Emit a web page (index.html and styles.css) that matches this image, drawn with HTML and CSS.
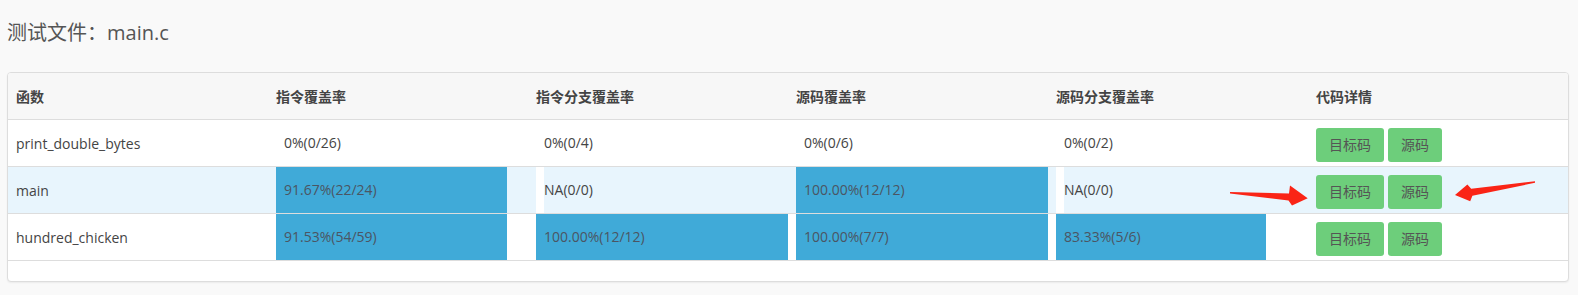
FILE: index.html
```html
<!DOCTYPE html>
<html lang="zh-CN">
<head>
<meta charset="utf-8">
<title>测试文件：main.c</title>
<link rel="stylesheet" href="styles.css">
</head>
<body>
<div class="page">
  <h3 class="title">测试文件：main.c</h3>
  <div class="panel">
    <table class="cov">
      <thead>
        <tr>
          <th>函数</th>
          <th>指令覆盖率</th>
          <th>指令分支覆盖率</th>
          <th>源码覆盖率</th>
          <th>源码分支覆盖率</th>
          <th>代码详情</th>
        </tr>
      </thead>
      <tbody>
        <tr>
          <td class="name">print_double_bytes</td>
          <td class="bar-cell"><div class="bar" style="width:0%">0%(0/26)</div></td>
          <td class="bar-cell"><div class="bar" style="width:0%">0%(0/4)</div></td>
          <td class="bar-cell"><div class="bar" style="width:0%">0%(0/6)</div></td>
          <td class="bar-cell"><div class="bar" style="width:0%">0%(0/2)</div></td>
          <td class="actions"><span class="btn">目标码</span><span class="btn">源码</span></td>
        </tr>
        <tr class="active">
          <td class="name">main</td>
          <td class="bar-cell"><div class="bar filled" style="width:91.67%">91.67%(22/24)</div></td>
          <td class="bar-cell"><div class="bar" style="width:0%">NA(0/0)</div></td>
          <td class="bar-cell"><div class="bar filled" style="width:100%">100.00%(12/12)</div></td>
          <td class="bar-cell"><div class="bar" style="width:0%">NA(0/0)</div></td>
          <td class="actions"><span class="btn">目标码</span><span class="btn">源码</span></td>
        </tr>
        <tr>
          <td class="name">hundred_chicken</td>
          <td class="bar-cell"><div class="bar filled" style="width:91.53%">91.53%(54/59)</div></td>
          <td class="bar-cell"><div class="bar filled" style="width:100%">100.00%(12/12)</div></td>
          <td class="bar-cell"><div class="bar filled" style="width:100%">100.00%(7/7)</div></td>
          <td class="bar-cell"><div class="bar filled" style="width:83.33%">83.33%(5/6)</div></td>
          <td class="actions"><span class="btn">目标码</span><span class="btn">源码</span></td>
        </tr>
      </tbody>
    </table>
    <div class="panel-foot"></div>
  </div>
  <svg class="annot" width="1578" height="295" viewBox="0 0 1578 295" xmlns="http://www.w3.org/2000/svg">
    <polygon fill="#fa2416" points="1230,191.9 1289,193.4 1290,185.5 1307.7,198.3 1292,205.5 1288.5,200.4 1230,193.5"/>
    <polygon fill="#fa2416" points="1535,181.3 1471.2,188.8 1467.4,184.4 1455,195 1470.2,201.2 1472.4,195.8 1535,182.8"/>
  </svg>
</div>
</body>
</html>
```
FILE: styles.css
```css
html, body {
  margin: 0;
  padding: 0;
  background: #f9f9f9;
}
.page {
  position: relative;
  width: 1578px;
  height: 295px;
  padding-left: 7px;
  box-sizing: border-box;
  font-family: "Open Sans", "Noto Sans CJK SC", sans-serif;
  font-size: 14px;
  color: #444;
}
.title {
  margin: 0;
  padding-top: 19px;
  font-size: 20px;
  line-height: 28px;
  font-weight: normal;
  color: #555;
}
.panel {
  margin-top: 25px;
  width: 1562px;
  box-sizing: border-box;
  background: #fff;
  border: 1px solid #ddd;
  border-radius: 4px;
  overflow: hidden;
  box-shadow: 0 1px 2px rgba(0, 0, 0, 0.06);
}
.cov {
  width: 1560px;
  table-layout: fixed;
  border-collapse: separate;
  border-spacing: 0;
}
.cov th {
  height: 46px;
  padding: 0 0 0 8px;
  text-align: left;
  font-weight: bold;
  color: #444;
  background: #f7f7f7;
  border-bottom: 1px solid #ddd;
}
.cov td {
  height: 46px;
  padding: 0 0 0 8px;
  border-bottom: 1px solid #ddd;
  vertical-align: middle;
  white-space: nowrap;
}
.cov tr.active td {
  background: #e8f5fd;
}
.cov td.bar-cell {
  overflow: visible;
}
.bar {
  box-sizing: border-box;
  height: 46px;
  line-height: 46px;
  padding-left: 8px;
  background: #fff;
  white-space: nowrap;
  color: #444;
}
.bar.filled {
  background: #40aad8;
  color: #4b5563;
}
.cov td.actions {
  vertical-align: top;
}
.actions .btn {
  display: inline-block;
  box-sizing: border-box;
  height: 34px;
  line-height: 34px;
  margin-top: 8px;
  margin-right: 4px;
  padding: 0 13px;
  border-radius: 3px;
  background: #6dce7b;
  color: #555;
  font-size: 14px;
  vertical-align: top;
}
.panel-foot {
  height: 20px;
}
.annot {
  position: absolute;
  left: 0;
  top: 0;
  pointer-events: none;
}
```
